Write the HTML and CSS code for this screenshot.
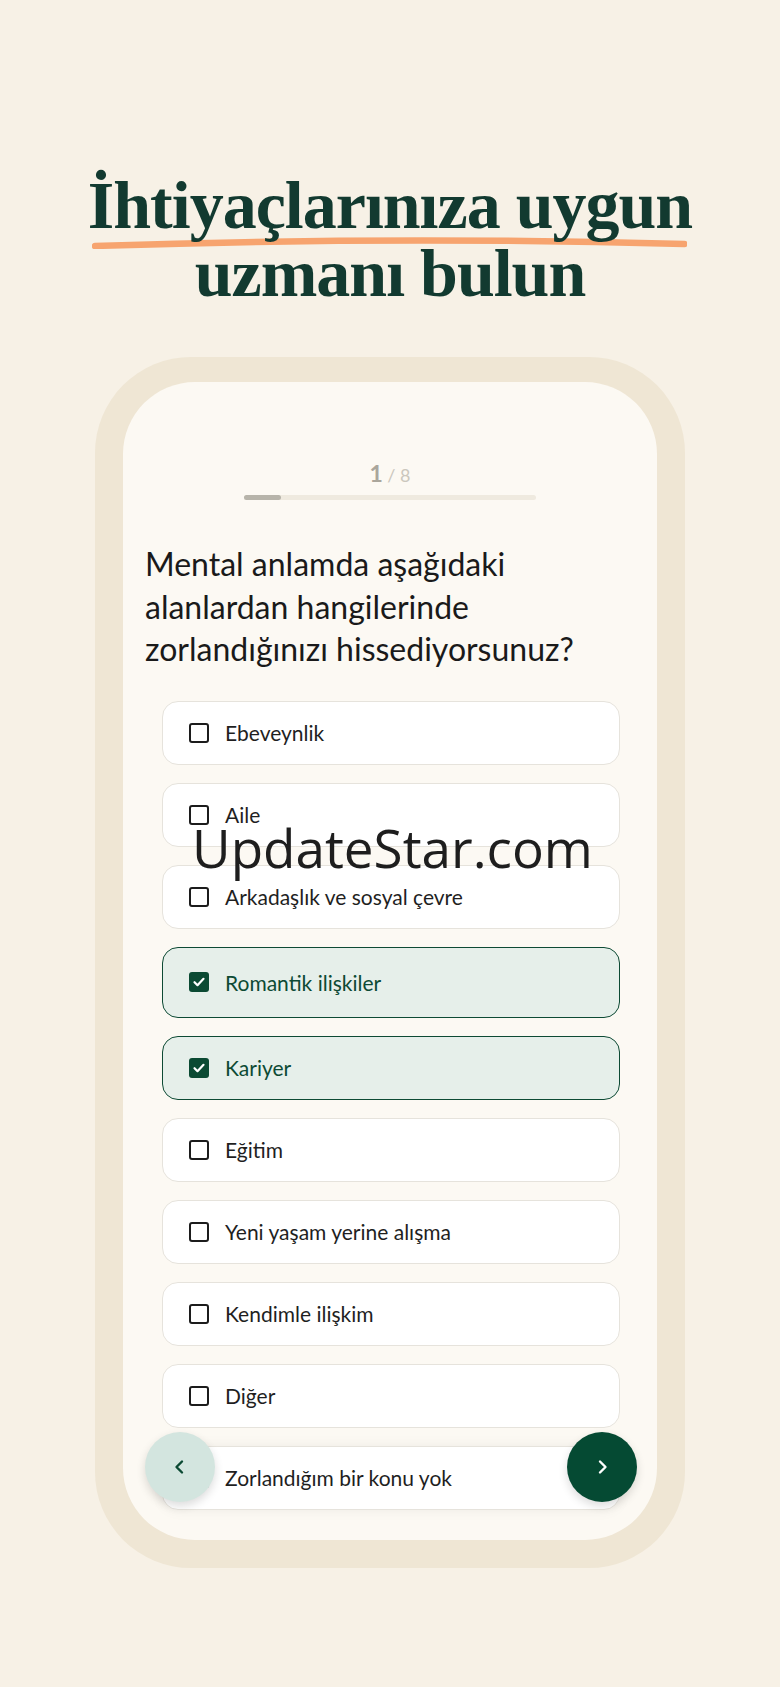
FILE: index.html
```html
<!DOCTYPE html>
<html lang="tr">
<head>
  <meta charset="UTF-8" />
  <meta name="viewport" content="width=device-width, initial-scale=1.0"/>
  <title>Uzman bul</title>
  <link rel="stylesheet" href="styles.css">
</head>
<body>
  <header class="hero">
    <h1 class="hero-title">
      <svg class="hero-line" viewBox="0 0 600 12" preserveAspectRatio="none">
        <path d="M3 9 Q300 -1 597 7" fill="none" stroke="#f7a46f" stroke-width="6.5" stroke-linecap="round"/>
      </svg>
      <span class="hero-text">İhtiyaçlarınıza uygun<br>uzmanı bulun</span>
    </h1>
  </header>

  <div class="phone">
    <div class="screen">
      <div class="step"><b>1</b> / 8</div>
      <div class="progress"><div class="progress-fill" style="width:37px"></div></div>

      <p class="question">Mental anlamda aşağıdaki alanlardan hangilerinde zorlandığınızı hissediyorsunuz?</p>

      <div class="options">
        <div class="option"><span class="box"></span>Ebeveynlik</div>
        <div class="option"><span class="box"></span>Aile</div>
        <div class="option"><span class="box"></span>Arkadaşlık ve sosyal çevre</div>
        <div class="option selected tall">
          <span class="box"><svg viewBox="0 0 20 20"><path d="M5.5 10.2l3 3 6-6.4" fill="none" stroke="#fff" stroke-width="2.2" stroke-linecap="round" stroke-linejoin="round"/></svg></span>Romantik ilişkiler
        </div>
        <div class="option selected">
          <span class="box"><svg viewBox="0 0 20 20"><path d="M5.5 10.2l3 3 6-6.4" fill="none" stroke="#fff" stroke-width="2.2" stroke-linecap="round" stroke-linejoin="round"/></svg></span>Kariyer
        </div>
        <div class="option"><span class="box"></span>Eğitim</div>
        <div class="option"><span class="box"></span>Yeni yaşam yerine alışma</div>
        <div class="option"><span class="box"></span>Kendimle ilişkim</div>
        <div class="option"><span class="box"></span>Diğer</div>
        <div class="option last"><span class="box"></span>Zorlandığım bir konu yok</div>
      </div>

      <button class="nav-btn back" aria-label="Geri">
        <svg viewBox="0 0 24 24"><path d="M14 6.5L8.5 12l5.5 5.5" fill="none" stroke="#0b4a33" stroke-width="2.4" stroke-linecap="round" stroke-linejoin="round"/></svg>
      </button>
      <button class="nav-btn next" aria-label="İleri">
        <svg viewBox="0 0 24 24"><path d="M10 6.5l5.5 5.5L10 17.5" fill="none" stroke="#fff" stroke-width="2.4" stroke-linecap="round" stroke-linejoin="round"/></svg>
      </button>
    </div>
  </div>

  <div class="watermark">UpdateStar.com</div>
</body>
</html>
```

FILE: styles.css
```css
body {
  margin: 0;
  background: #f7f1e6;
  font-family: 'Lato', 'Noto Sans', sans-serif;
  position: relative;
  min-height: 1687px;
}
.hero {
  padding-top: 171px;
  text-align: center;
}
.hero-title {
  position: relative;
  display: inline-block;
  margin: 0;
  font-family: 'Liberation Serif', serif;
  font-weight: bold;
  font-size: 68px;
  line-height: 68px;
  letter-spacing: -1px;
  color: #123a30;
}
.hero-text {
  position: relative;
}
.hero-line {
  position: absolute;
  left: 4px;
  top: 66px;
  width: calc(100% - 9px);
  height: 12px;
}
.phone {
  width: 534px;
  margin: 50px auto 0;
  padding: 25px 28px 28px;
  background: #efe6d4;
  border-radius: 96px;
}
.screen {
  position: relative;
  height: 1158px;
  background: #fcf9f3;
  border-radius: 72px;
  padding-top: 79px;
  box-sizing: border-box;
  overflow: hidden;
}
.step {
  text-align: center;
  font-size: 18px;
  line-height: 24px;
  color: #cbc7bd;
}
.step b {
  font-size: 23px;
  color: #aaa69c;
}
.progress {
  width: 292px;
  height: 5px;
  margin: 8px auto 0;
  background: #efeadf;
  border-radius: 3px;
}
.progress-fill {
  height: 100%;
  background: #b7b4aa;
  border-radius: 3px;
}
.question {
  margin: 43px 42px 0 22px;
  font-size: 32px;
  line-height: 42.5px;
  color: #1a1a1a;
}
.options {
  display: flex;
  flex-direction: column;
  gap: 18px;
  margin: 30px 37px 0 39px;
}
.option {
  display: flex;
  align-items: center;
  height: 64px;
  box-sizing: border-box;
  padding-left: 26px;
  background: #fff;
  border: 1.5px solid #e6e3dc;
  border-radius: 16px;
  font-size: 21px;
  color: #1f1f1f;
}
.option.tall {
  height: 71px;
}
.option.selected {
  background: #e6efea;
  border-color: #0d4a34;
  color: #0d4a34;
}
.option.last {
  box-shadow: 0 0 14px rgba(0, 0, 0, 0.06);
}
.box {
  width: 20px;
  height: 20px;
  margin-right: 16px;
  box-sizing: border-box;
  border: 2.2px solid #1c1c1c;
  border-radius: 3px;
  flex-shrink: 0;
}
.selected .box {
  border: none;
  background: #0b4a33;
}
.box svg {
  display: block;
  width: 20px;
  height: 20px;
}
.nav-btn {
  position: absolute;
  top: 1050px;
  width: 70px;
  height: 70px;
  border: none;
  border-radius: 50%;
  padding: 0;
  display: flex;
  align-items: center;
  justify-content: center;
  box-shadow: 0 4px 10px rgba(0, 0, 0, 0.14);
}
.nav-btn svg {
  width: 24px;
  height: 24px;
}
.back {
  left: 22px;
  background: #d3e5df;
}
.next {
  right: 20px;
  background: #054a33;
}
.watermark {
  position: absolute;
  left: 192px;
  top: 811px;
  font-family: 'Open Sans', sans-serif;
  font-size: 53px;
  color: #1e1e1e;
  white-space: nowrap;
}
```
